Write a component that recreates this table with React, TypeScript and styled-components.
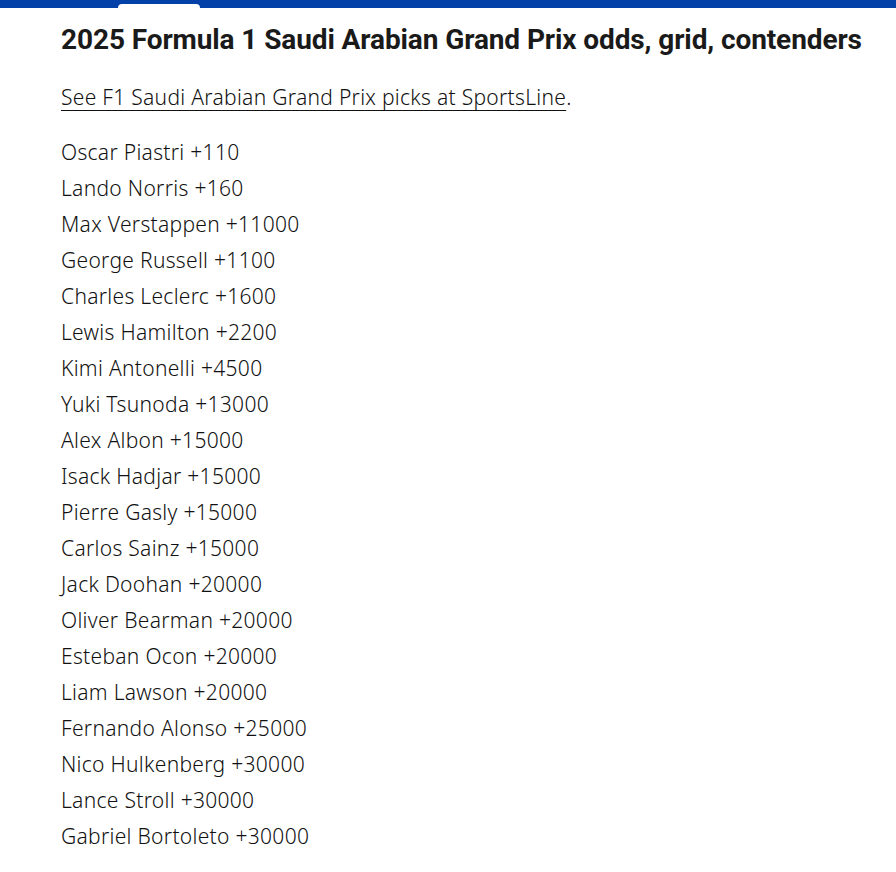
import React from "react";
import styled, { createGlobalStyle } from "styled-components";

const Global = createGlobalStyle`
  html, body { margin: 0; padding: 0; background: #fff; }
  body { font-family: "Noto Sans", sans-serif; color: #111; }
`;

const TopBar = styled.div`
  height: 8px;
  background: #0340a8;
  display: flex;
  align-items: flex-end;
  padding-left: 118px;
`;

const Tab = styled.div`
  width: 82px;
  height: 4px;
  background: #fff;
  border-radius: 4px 4px 0 0;
`;

const Content = styled.main`
  padding: 14px 0 0 61px;
`;

const Heading = styled.h2`
  margin: 0;
  font-family: Roboto, sans-serif;
  font-weight: 700;
  font-size: 28px;
  line-height: 36px;
  letter-spacing: -0.1px;
  color: #1a1a1a;
`;

const LinkLine = styled.p`
  margin: 25px 0 0;
  font-size: 21px;
  line-height: 28px;
  font-weight: 300;
  letter-spacing: 0.3px;
`;

const Link = styled.a`
  color: #111;
  text-decoration: underline;
  text-underline-offset: 5px;
  text-decoration-thickness: 1px;
`;

const List = styled.div`
  margin-top: 23px;
  display: flex;
  flex-direction: column;
`;

const Row = styled.div`
  font-size: 21px;
  line-height: 36px;
  font-weight: 300;
  letter-spacing: 0.3px;
`;

const odds: [string, string][] = [
  ["Oscar Piastri", "+110"],
  ["Lando Norris", "+160"],
  ["Max Verstappen", "+11000"],
  ["George Russell", "+1100"],
  ["Charles Leclerc", "+1600"],
  ["Lewis Hamilton", "+2200"],
  ["Kimi Antonelli", "+4500"],
  ["Yuki Tsunoda", "+13000"],
  ["Alex Albon", "+15000"],
  ["Isack Hadjar", "+15000"],
  ["Pierre Gasly", "+15000"],
  ["Carlos Sainz", "+15000"],
  ["Jack Doohan", "+20000"],
  ["Oliver Bearman", "+20000"],
  ["Esteban Ocon", "+20000"],
  ["Liam Lawson", "+20000"],
  ["Fernando Alonso", "+25000"],
  ["Nico Hulkenberg", "+30000"],
  ["Lance Stroll", "+30000"],
  ["Gabriel Bortoleto", "+30000"],
];

export default function App() {
  return (
    <>
      <Global />
      <TopBar>
        <Tab />
      </TopBar>
      <Content>
        <Heading>2025 Formula 1 Saudi Arabian Grand Prix odds, grid, contenders</Heading>
        <LinkLine>
          <Link href="#">See F1 Saudi Arabian Grand Prix picks at SportsLine</Link>.
        </LinkLine>
        <List>
          {odds.map(([n, o]) => (
            <Row key={n}>
              {n} {o}
            </Row>
          ))}
        </List>
      </Content>
    </>
  );
}
